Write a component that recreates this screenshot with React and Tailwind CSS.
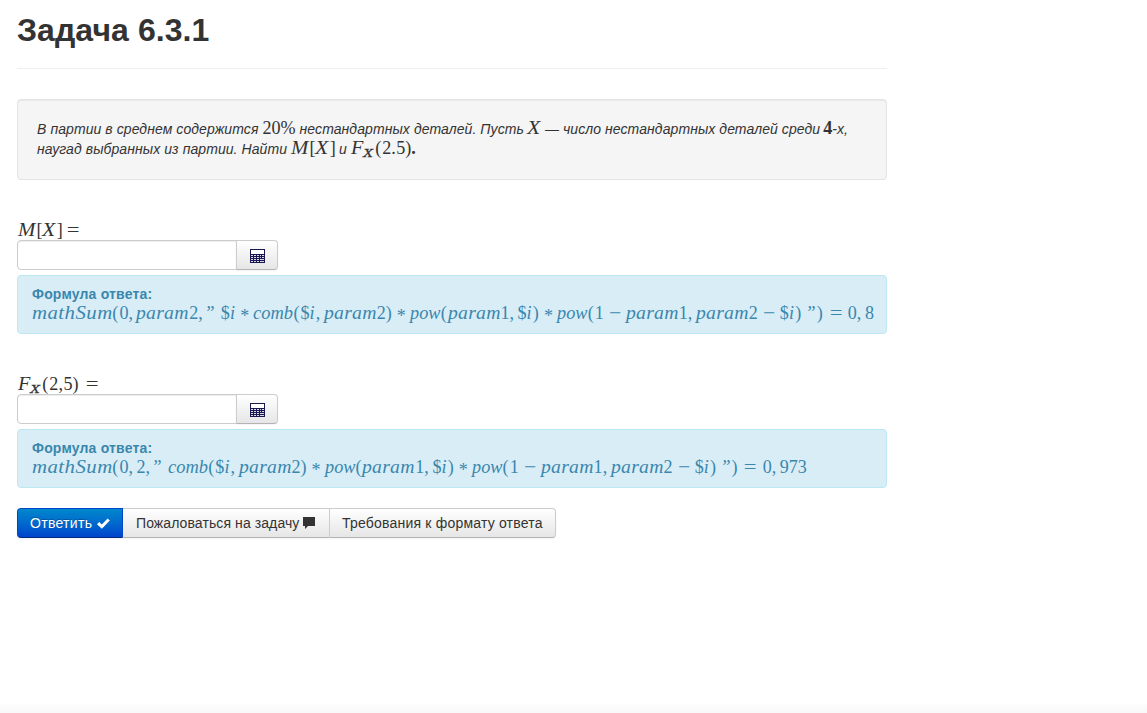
import React from "react";

const GLYPHS = {
  mathSum: "italic w-[4.439em] tracking-[0.022em] origin-left scale-x-[1.15]",
  param: "italic w-[2.918em] tracking-[0.012em] origin-left scale-x-[1.09]",
  comb: "italic w-[2.225em] origin-left scale-x-[1.02]",
  pow: "italic w-[1.704em] origin-left scale-x-[1.01]",
  i: "italic w-[0.345em]",
  M: "italic w-[1.02em] origin-left scale-x-[1.15]",
  X: "italic w-[0.83em] origin-left scale-x-[1.2]",
  F: "italic w-[0.68em] origin-left scale-x-[1.12]",
  "(": "w-[0.389em]",
  ")": "w-[0.389em]",
  "[": "w-[0.29em]",
  "]": "w-[0.29em]",
  ",": "w-[0.445em]",
  ".": "w-[0.278em]",
  "*": "w-[0.944em] text-center relative top-[0.14em]",
  "−": "w-[1.222em] text-center scale-x-[1.2]",
  "=": "w-[1.334em] text-center scale-x-[1.25]",
  "”": "w-[0.5em]",
  " ": "w-[0.3em]",
  "%": "w-[0.833em]",
};

function Formula({ tokens, className = "" }) {
  return (
    <span
      className={
        "inline-block whitespace-pre align-baseline font-['Liberation_Serif',serif] text-[18.1px] leading-[18px] tracking-normal not-italic " +
        className
      }
    >
      {tokens.map((t, n) => (
        <span key={n} className={"inline-block " + (GLYPHS[t] || "")}>
          {t}
        </span>
      ))}
    </span>
  );
}

function Sub() {
  return (
    <span className="relative top-[3px] inline-block w-[12px] origin-left scale-x-[1.25] font-['Liberation_Serif',serif] text-[13px] leading-[14px] tracking-normal italic [-webkit-text-stroke:0.3px_#333]">
      X
    </span>
  );
}

const SUM_MEAN = [
  "mathSum", "(", "0", ",", "param", "2", ",", "”", " ", "$", "i", "*", "comb", "(", "$", "i", ",", "param", "2", ")",
  "*", "pow", "(", "param", "1", ",", "$", "i", ")", "*", "pow", "(", "1", "−", "param", "1", ",", "param", "2", "−",
  "$", "i", ")", " ", "”", ")", "=", "0", ",", "8",
];

const SUM_DIST = [
  "mathSum", "(", "0", ",", "2", ",", "”", " ", "comb", "(", "$", "i", ",", "param", "2", ")",
  "*", "pow", "(", "param", "1", ",", "$", "i", ")", "*", "pow", "(", "1", "−", "param", "1", ",", "param", "2", "−",
  "$", "i", ")", " ", "”", ")", "=", "0", ",", "973",
];

function CalculatorIcon() {
  return (
    <svg width="15" height="14" viewBox="0 0 15 14" shapeRendering="crispEdges">
      <rect x="0" y="0" width="15" height="14" fill="#18184e" />
      <rect x="1" y="1" width="13" height="4" fill="#fff" />
      <g fill="#dcdcea">
        <path d="M1 6h2v1H1zM4 6h2v1H4zM7 6h2v1H7zM10 6h1v1h-1zM12 6h2v1h-2z" />
        <path d="M1 8h2v1H1zM4 8h2v1H4zM7 8h2v1H7zM10 8h1v1h-1zM12 8h2v1h-2z" />
        <path d="M1 10h2v1H1zM4 10h2v1H4zM7 10h2v1H7zM10 10h4v1h-4z" />
        <path d="M1 12h2v1H1zM4 12h2v1H4zM7 12h2v1H7zM10 12h4v1h-4z" />
      </g>
    </svg>
  );
}

function AnswerField() {
  return (
    <div className="flex h-[30px]">
      <input
        type="text"
        className="h-[30px] w-[220px] rounded-l-[4px] border border-[#ccc] bg-white px-1.5 shadow-[inset_0_1px_1px_rgba(0,0,0,0.075)] outline-none"
      />
      <button className="-ml-px flex h-[30px] w-[42px] items-center justify-center rounded-r-[4px] border border-[#ccc] border-b-[#b3b3b3] bg-linear-to-b from-white to-[#e6e6e6] pt-0.5 pl-px shadow-[0_1px_2px_rgba(0,0,0,0.05)]">
        <CalculatorIcon />
      </button>
    </div>
  );
}

function Answer({ tokens }) {
  return (
    <div className="mt-[5px] h-[59px] rounded-[4px] border border-[#bce8f1] bg-[#d9edf7] pt-2 pl-[14px] text-[#3a87ad]">
      <div className="h-5 font-bold tracking-[0.18px]">Формула ответа:</div>
      <div className="h-5 whitespace-nowrap">
        <Formula tokens={tokens} />
      </div>
    </div>
  );
}

export default function App() {
  return (
    <div className="flex h-[713px] w-full flex-col overflow-hidden bg-white font-['Liberation_Sans',Arial,sans-serif] text-[14px] leading-5 text-[#333]">
      <main className="ml-[17px] w-[870px] flex-1">
        <h1 className="h-[69px] border-b border-[#eee] pt-[10px] text-[32px] leading-10 font-bold tracking-[0.07px]">
          Задача 6.3.1
        </h1>

        <section className="mt-[30px] h-[81px] rounded-[4px] border border-[#e3e3e3] bg-[#f5f5f5] p-[19px] tracking-[0.08px] italic shadow-[inset_0_1px_1px_rgba(0,0,0,0.05)]">
          <p className="h-5 whitespace-nowrap">
            В партии в среднем содержится <Formula tokens={["2", "0", "%"]} /> нестандартных деталей. Пусть{" "}
            <Formula tokens={["X"]} className="-mr-[1px] -ml-[1px]" /> — число нестандартных деталей среди{" "}
            <Formula tokens={["4"]} className="-ml-px font-bold" />
            -х,
          </p>
          <p className="h-5 whitespace-nowrap">
            наугад выбранных из партии. Найти <Formula tokens={["M", "[", "X", "]"]} /> и{" "}
            <Formula tokens={["F"]} />
            <Sub />
            <Formula tokens={["(", "2", ".", "5", ")"]} />
            <Formula tokens={["."]} className="-ml-px font-bold" />
          </p>
        </section>

        <section className="mt-10">
          <div className="h-5 pt-px pl-px whitespace-nowrap">
            <Formula tokens={["M", "[", "X", "]"]} />
            <Formula tokens={["="]} className="-ml-px" />
          </div>
          <AnswerField />
          <Answer tokens={SUM_MEAN} />
        </section>

        <section className="mt-10">
          <div className="h-5 pt-px pl-px whitespace-nowrap">
            <Formula tokens={["F"]} />
            <Sub />
            <Formula tokens={["(", "2"]} />
            <Formula tokens={[","]} className="-mr-[3px]" />
            <Formula tokens={["5", ")", "="]} />
          </div>
          <AnswerField />
          <Answer tokens={SUM_DIST} />
        </section>

        <div className="mt-5 flex h-[30px] w-max rounded-[4px] whitespace-nowrap shadow-[0_1px_2px_rgba(0,0,0,0.05)]">
          <button className="flex w-[106px] items-center gap-[5px] rounded-l-[4px] border border-[#04c] border-b-[#002a80] bg-linear-to-b from-[#08c] to-[#04c] pl-3 tracking-[0.3px] text-white [text-shadow:0_-1px_0_rgba(0,0,0,0.25)]">
            Ответить
            <svg width="13" height="11" viewBox="0 0 13 11">
              <path d="M0 6.2 2.2 4 4.8 6.4 10.6.4 12.8 2.6 4.9 10.8Z" fill="#fff" />
            </svg>
          </button>
          <button className="flex w-[206px] items-center gap-1 border-y border-[#ccc] border-b-[#b3b3b3] bg-linear-to-b from-white to-[#e6e6e6] pl-[13px] tracking-[0.09px]">
            Пожаловаться на задачу
            <svg width="13" height="12" viewBox="0 0 13 12">
              <path d="M0 0h12v9H5L2 12V9H0Z" fill="#333" />
            </svg>
          </button>
          <button className="w-[227px] rounded-r-[4px] border border-[#ccc] border-b-[#b3b3b3] bg-linear-to-b from-white to-[#e6e6e6] pl-3 text-left tracking-[0.2px]">
            Требования к формату ответа
          </button>
        </div>
      </main>
      <div className="h-[9px] bg-linear-to-b from-[#fdfdfd] to-[#f8f8f8]" />
    </div>
  );
}
